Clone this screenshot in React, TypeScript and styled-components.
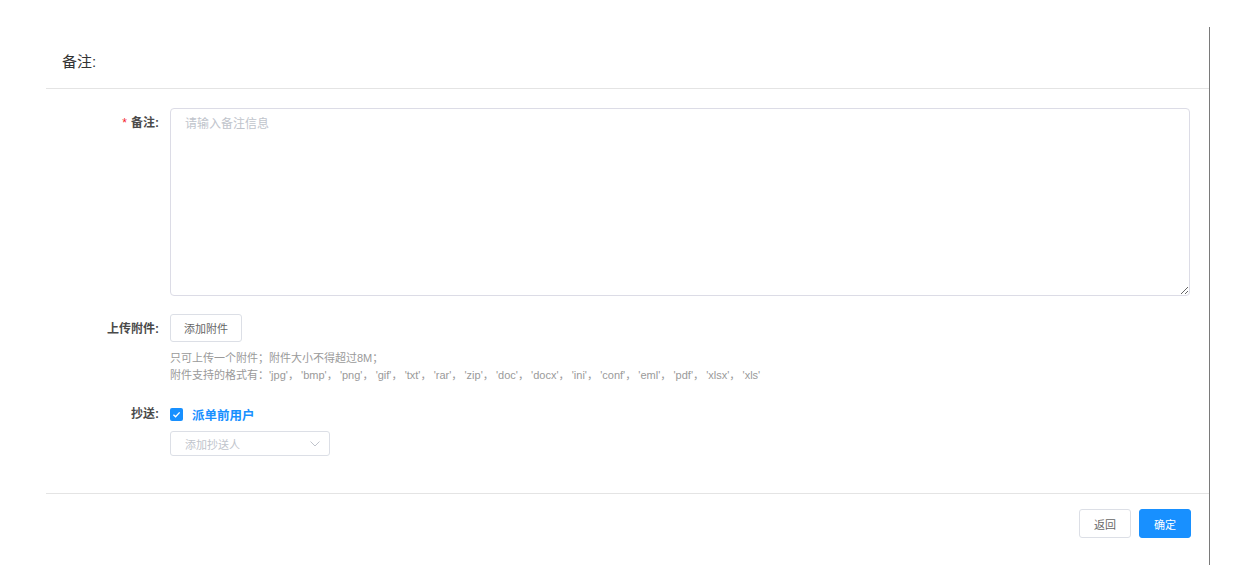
import React from "react"
import styled, { createGlobalStyle } from "styled-components"

const GlobalStyle = createGlobalStyle`
  html, body {
    margin: 0;
    padding: 0;
    background: #ffffff;
  }
  body {
    font-family: "Liberation Sans", "Noto Sans CJK SC", sans-serif;
    color: #333333;
  }
`

const Page = styled.div`
  padding-top: 27px;
  padding-left: 46px;
`

const Panel = styled.div`
  width: 1163px;
  height: 538px;
  border-right: 1px solid #7a7a7a;
  display: flex;
  flex-direction: column;
`

const Header = styled.div`
  height: 62px;
  box-sizing: border-box;
  padding: 6px 0 0 16px;
  display: flex;
  align-items: center;
  font-size: 15px;
  color: #333333;
  border-bottom: 1px solid #e4e4e4;
`

const Body = styled.div`
  flex: 1;
  padding: 19px 19px 0 0;
  display: flex;
  flex-direction: column;
`

const Row = styled.div<{ $gap?: number }>`
  display: flex;
  align-items: flex-start;
  margin-bottom: ${p => p.$gap ?? 0}px;
`

const Label = styled.div<{ $top: number }>`
  width: 113px;
  flex-shrink: 0;
  padding-right: 11px;
  padding-top: ${p => p.$top}px;
  text-align: right;
  font-size: 12px;
  font-weight: bold;
  color: #4a4a4a;
  line-height: 16px;
`

const Star = styled.span`
  color: #f5222d;
  font-weight: normal;
  margin-right: 4px;
`

const Control = styled.div`
  flex: 1;
  display: flex;
  flex-direction: column;
`

const TextArea = styled.textarea`
  width: 1020px;
  height: 188px;
  box-sizing: border-box;
  border: 1px solid #dcdce6;
  border-radius: 4px;
  padding: 8px 14px;
  font-family: "Liberation Sans", "Noto Sans CJK SC", sans-serif;
  font-size: 12px;
  line-height: 14px;
  color: #333;
  outline: none;
  &::placeholder {
    color: #c0c4cc;
  }
`

const Button = styled.button<{ $primary?: boolean }>`
  height: ${p => (p.$primary !== undefined ? 29 : 28)}px;
  padding: 0;
  box-sizing: border-box;
  border-radius: 3px;
  font-family: "Liberation Sans", "Noto Sans CJK SC", sans-serif;
  font-size: 11px;
  cursor: pointer;
  border: 1px solid ${p => (p.$primary ? "#1890ff" : "#dcdfe6")};
  background: ${p => (p.$primary ? "#1890ff" : "#ffffff")};
  color: ${p => (p.$primary ? "#ffffff" : "#666666")};
`

const UploadButton = styled(Button)`
  width: 72px;
`

const FooterButton = styled(Button)`
  width: 52px;
`

const Hint = styled.div`
  margin-top: 8px;
  font-size: 11px;
  line-height: 17px;
  color: #9a9a9a;
`

const CheckRow = styled.label`
  display: flex;
  align-items: center;
  gap: 9px;
  height: 16px;
  margin-top: 1px;
  font-size: 12.5px;
  font-weight: bold;
  color: #1890ff;
`

const CheckBox = styled.span`
  width: 13px;
  height: 13px;
  border-radius: 2px;
  background: #1890ff;
  display: flex;
  align-items: center;
  justify-content: center;
`

const Select = styled.div`
  margin-top: 9px;
  width: 160px;
  height: 25px;
  box-sizing: border-box;
  border: 1px solid #dcdfe6;
  border-radius: 3px;
  padding: 0 9px 0 14px;
  display: flex;
  align-items: center;
  justify-content: space-between;
  font-size: 11px;
  color: #c0c4cc;
`

const Footer = styled.div`
  border-top: 1px solid #e4e4e4;
  height: 72px;
  box-sizing: border-box;
  padding: 15px 18px 0 0;
  display: flex;
  justify-content: flex-end;
  align-items: flex-start;
  gap: 8px;
`

const formats = ["jpg", "bmp", "png", "gif", "txt", "rar", "zip", "doc", "docx", "ini", "conf", "eml", "pdf", "xlsx", "xls"]

export default function App() {
  return (
    <>
      <GlobalStyle />
      <Page>
        <Panel>
          <Header>备注:</Header>
          <Body>
            <Row $gap={18}>
              <Label $top={7}>
                <Star>*</Star>备注:
              </Label>
              <Control>
                <TextArea placeholder="请输入备注信息" />
              </Control>
            </Row>
            <Row $gap={21}>
              <Label $top={7}>上传附件:</Label>
              <Control>
                <div>
                  <UploadButton>添加附件</UploadButton>
                </div>
                <Hint>
                  只可上传一个附件；附件大小不得超过8M；
                  <br />
                  附件支持的格式有：{formats.map(f => `'${f}'`).join("，\u2009")}
                </Hint>
              </Control>
            </Row>
            <Row>
              <Label $top={1}>抄送:</Label>
              <Control>
                <CheckRow>
                  <CheckBox>
                    <svg width="9" height="9" viewBox="0 0 10 10">
                      <path d="M1.6 5.2 L4 7.5 L8.5 2.6" fill="none" stroke="#fff" strokeWidth="1.5" />
                    </svg>
                  </CheckBox>
                  派单前用户
                </CheckRow>
                <Select>
                  添加抄送人
                  <svg width="10" height="6" viewBox="0 0 10 6">
                    <path d="M0.5 0.5 L5 5 L9.5 0.5" fill="none" stroke="#c0c4cc" strokeWidth="1" />
                  </svg>
                </Select>
              </Control>
            </Row>
          </Body>
          <Footer>
            <FooterButton $primary={false}>返回</FooterButton>
            <FooterButton $primary>确定</FooterButton>
          </Footer>
        </Panel>
      </Page>
    </>
  )
}
